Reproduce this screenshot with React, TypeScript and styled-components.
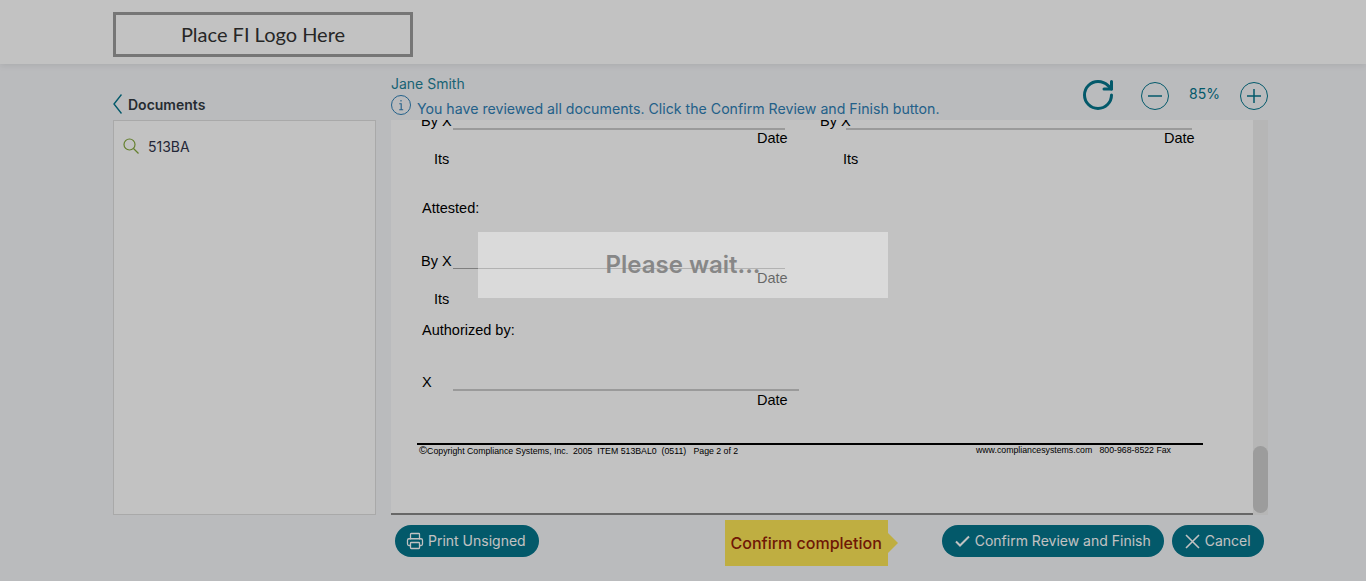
import { createGlobalStyle, styled } from "styled-components";
import { Printer, RotateCw } from "lucide-react";

const GlobalStyle = createGlobalStyle`
  html, body {
    margin: 0;
    padding: 0;
    height: 100%;
    overflow: hidden;
    background: #f5f6f9;
    font-family: Inter, "Liberation Sans", sans-serif;
  }
`;

const Page = styled.div`
  position: relative;
  width: 1366px;
  height: 581px;
  overflow: hidden;
  background: #f5f6f9;
`;

const Header = styled.header`
  height: 64px;
  box-sizing: border-box;
  padding: 12px 0 0 113px;
  background: #fff;
  box-shadow: 0 2px 6px rgba(0, 0, 0, 0.08);
`;

const LogoBox = styled.div`
  width: 300px;
  height: 45px;
  box-sizing: border-box;
  border: 3px solid #9c9c9c;
  padding-bottom: 2px;
  display: flex;
  align-items: center;
  justify-content: center;
  font-family: Lato, sans-serif;
  font-size: 20px;
  color: #333;
`;

const Main = styled.main`
  display: grid;
  grid-template-columns: 263px 877px;
  grid-template-rows: 56px 395px 66px;
  column-gap: 15px;
  padding-left: 113px;
`;

const SideTitle = styled.div`
  display: flex;
  align-items: flex-end;
  gap: 6px;
  padding-bottom: 6px;
  font-size: 14px;
  font-weight: 600;
  color: #333a42;
  line-height: 18px;
`;

const SideList = styled.div`
  box-sizing: border-box;
  border: 1px solid #dedede;
  background: #fff;
  padding: 15px 9px;
`;

const DocItem = styled.div`
  display: flex;
  align-items: center;
  gap: 9px;
  font-size: 14px;
  line-height: 21px;
  color: #30344a;
  svg {
    flex: none;
    margin-top: -1px;
  }
`;

const ViewerHead = styled.div`
  display: flex;
  justify-content: space-between;
  padding-top: 12px;
`;

const UserName = styled.div`
  font-size: 14px;
  line-height: 16px;
  color: #1f8299;
`;

const Notice = styled.div`
  display: flex;
  align-items: flex-start;
  gap: 6px;
  margin-top: 3px;
  font-size: 14.16px;
  line-height: 20px;
  color: #2f7fb5;
  svg {
    flex: none;
  }
  span {
    padding-top: 4px;
  }
`;

const Controls = styled.div`
  display: flex;
  align-items: flex-start;
  height: 40px;
  color: #04758c;
`;

const RefreshIcon = styled(RotateCw)`
  margin: 1px 25px 0 0;
`;

const RoundIcon = styled.svg`
  margin-top: 6px;
`;

const Zoom = styled.span`
  width: 71px;
  margin-top: 10px;
  text-align: center;
  font-size: 14px;
  line-height: 16px;
`;

const Viewer = styled.div`
  display: flex;
`;

const DocFrame = styled.div`
  width: 862px;
  height: 395px;
  box-sizing: border-box;
  border-bottom: 2px solid #888;
  background: #fff;
  overflow: hidden;
`;

const Track = styled.div`
  width: 15px;
  height: 395px;
  display: flex;
  align-items: flex-end;
  padding-bottom: 2px;
  box-sizing: border-box;
  background: #f0f0f0;
`;

const Thumb = styled.div`
  width: 15px;
  height: 67px;
  border-radius: 8px;
  background: #cdcdcd;
`;

const DocPage = styled.div`
  width: 786px;
  margin: -7px 0 0 26px;
  font-family: "Liberation Sans", Arial, sans-serif;
  font-size: 14.5px;
  line-height: 16px;
  color: #000;
`;

const SigColumns = styled.div`
  display: flex;
`;

const SigBlock = styled.div<{ $width: number; $top?: number }>`
  width: ${(p) => p.$width}px;
  margin-top: ${(p) => p.$top ?? 0}px;
`;

const SigRow = styled.div`
  display: flex;
  height: 16px;
`;

const SigLabel = styled.span<{ $width: number; $pad?: number }>`
  box-sizing: border-box;
  width: ${(p) => p.$width}px;
  padding-left: ${(p) => p.$pad ?? 4}px;
  white-space: nowrap;
`;

const SigRule = styled.span<{ $width: number; $thin?: boolean }>`
  width: ${(p) => p.$width}px;
  height: 15px;
  border-bottom: ${(p) => (p.$thin ? "1px solid #a8a8a8" : "2px solid #cbcbcb")};
`;

const DateLabel = styled.div<{ $left: number; $gap?: number }>`
  margin: ${(p) => p.$gap ?? 1}px 0 0 ${(p) => p.$left}px;
`;

const Its = styled.div<{ $left?: number }>`
  margin: 5px 0 0 ${(p) => p.$left ?? 17}px;
`;

const Caption = styled.div<{ $top: number }>`
  margin: ${(p) => p.$top}px 0 0 5px;
`;

const FooterRule = styled.div`
  margin-top: 35px;
  height: 2px;
  background: #000;
`;

const FooterText = styled.div`
  display: flex;
  justify-content: space-between;
  padding: 0 32px 0 2px;
  font-size: 8.75px;
  line-height: 11px;
  white-space: pre;
`;

const CopyMark = styled.span`
  font-size: 11px;
  line-height: 11px;
`;

const Actions = styled.div`
  display: flex;
  align-items: flex-start;
  width: 873px;
  padding: 5px 0 0 4px;
  box-sizing: border-box;
`;

const PillButton = styled.button<{ $ml?: number }>`
  height: 32px;
  margin-left: ${(p) => p.$ml ?? 0}px;
  margin-top: 5px;
  padding: 0 13px 2px;
  border: 0;
  border-radius: 16px;
  display: flex;
  align-items: center;
  gap: 5px;
  background: #04758c;
  color: #fff;
  font-family: Inter, "Liberation Sans", sans-serif;
  font-size: 14px;
  font-weight: 400;
  white-space: nowrap;
  svg {
    flex: none;
    margin-top: 2px;
  }
`;

const PrintIcon = styled(Printer)`
  margin: 2px -1px 0 -2px;
`;

const Hint = styled.div`
  position: relative;
  width: 163px;
  height: 46px;
  margin-left: 186px;
  display: flex;
  align-items: center;
  justify-content: center;
  background: #fbe556;
  color: #922207;
  font-size: 16px;
  font-weight: 500;
  white-space: nowrap;
  &::after {
    content: "";
    position: absolute;
    left: 100%;
    top: 13px;
    border-style: solid;
    border-width: 10px 0 10px 10px;
    border-color: transparent transparent transparent #fbe556;
  }
`;

const Dimmer = styled.div`
  position: absolute;
  inset: 0;
  padding-bottom: 51px;
  box-sizing: border-box;
  display: flex;
  align-items: center;
  justify-content: center;
  background: rgba(0, 0, 0, 0.24);
`;

const WaitBox = styled.div`
  width: 410px;
  height: 66px;
  padding-bottom: 2px;
  box-sizing: border-box;
  display: flex;
  align-items: center;
  justify-content: center;
  background: rgba(255, 255, 255, 0.4);
  color: #878787;
  font-size: 24px;
  font-weight: 600;
`;

export default function App() {
  return (
    <Page>
      <GlobalStyle />
      <Header>
        <LogoBox>Place FI Logo Here</LogoBox>
      </Header>
      <Main>
        <SideTitle>
          <svg width="9" height="20" viewBox="0 0 9 20" fill="none" stroke="#04758c" strokeWidth="1.4">
            <path d="M8.5 0.5 1 10l7.5 9.5" />
          </svg>
          Documents
        </SideTitle>
        <ViewerHead>
          <div>
            <UserName>Jane Smith</UserName>
            <Notice>
              <svg width="20" height="20" viewBox="0 0 20 20" fill="none" stroke="#2f7fb5">
                <circle cx="10" cy="10" r="9.5" />
                <path d="M10 5v1.5M8.3 8.8H10.2v6M8.2 14.8h4" strokeWidth="1.1" />
              </svg>
              <span>You have reviewed all documents. Click the Confirm Review and Finish button.</span>
            </Notice>
          </div>
          <Controls>
            <RefreshIcon size={36} strokeWidth={2} />
            <RoundIcon width="28" height="28" viewBox="0 0 28 28" fill="none" stroke="currentColor">
              <circle cx="14" cy="14" r="13.5" />
              <path d="M7 14h14" strokeWidth="1.5" />
            </RoundIcon>
            <Zoom>85%</Zoom>
            <RoundIcon width="28" height="28" viewBox="0 0 28 28" fill="none" stroke="currentColor">
              <circle cx="14" cy="14" r="13.5" />
              <path d="M7 14h14M14 7v14" strokeWidth="1.5" />
            </RoundIcon>
          </Controls>
        </ViewerHead>
        <SideList>
          <DocItem>
            <svg width="16" height="16" viewBox="0 0 16 16" fill="none" stroke="#84a83c" strokeWidth="1.2">
              <circle cx="6.5" cy="6.5" r="5.5" />
              <path d="M10.5 10.5 15.5 15.5" />
            </svg>
            513BA
          </DocItem>
        </SideList>
        <Viewer>
          <DocFrame>
            <DocPage>
              <SigColumns>
                <SigBlock $width={399}>
                  <SigRow>
                    <SigLabel $width={36}>By X</SigLabel>
                    <SigRule $width={332} />
                  </SigRow>
                  <DateLabel $left={340}>Date</DateLabel>
                  <Its>Its</Its>
                </SigBlock>
                <SigBlock $width={380}>
                  <SigRow>
                    <SigLabel $width={30}>By X</SigLabel>
                    <SigRule $width={346} />
                  </SigRow>
                  <DateLabel $left={348}>Date</DateLabel>
                  <Its $left={27}>Its</Its>
                </SigBlock>
              </SigColumns>
              <Caption $top={33}>Attested:</Caption>
              <SigBlock $width={399} $top={37}>
                <SigRow>
                  <SigLabel $width={36}>By X</SigLabel>
                  <SigRule $width={332} $thin />
                </SigRow>
                <DateLabel $left={340}>Date</DateLabel>
                <Its>Its</Its>
              </SigBlock>
              <Caption $top={15}>Authorized by:</Caption>
              <SigBlock $width={399} $top={36}>
                <SigRow>
                  <SigLabel $width={36} $pad={5}>X</SigLabel>
                  <SigRule $width={346} />
                </SigRow>
                <DateLabel $left={340} $gap={2}>Date</DateLabel>
              </SigBlock>
              <FooterRule />
              <FooterText>
                <span><CopyMark>©</CopyMark>Copyright Compliance Systems, Inc.  2005  ITEM 513BAL0  (0511)   Page 2 of 2</span>
                <span>www.compliancesystems.com   800-968-8522 Fax</span>
              </FooterText>
            </DocPage>
          </DocFrame>
          <Track>
            <Thumb />
          </Track>
        </Viewer>
        <div />
        <Actions>
          <PillButton>
            <PrintIcon size={18} strokeWidth={1.7} />
            Print Unsigned
          </PillButton>
          <Hint>Confirm completion</Hint>
          <PillButton $ml={54}>
            <svg width="15" height="12" viewBox="0 0 15 12" fill="none" stroke="currentColor" strokeWidth="2">
              <path d="M1 6.5 5 10.5 14 1.5" />
            </svg>
            Confirm Review and Finish
          </PillButton>
          <PillButton $ml={8}>
            <svg width="15" height="15" viewBox="0 0 15 15" fill="none" stroke="currentColor" strokeWidth="1.6">
              <path d="M1 1l13 13M14 1 1 14" />
            </svg>
            Cancel
          </PillButton>
        </Actions>
      </Main>
      <Dimmer>
        <WaitBox>Please wait...</WaitBox>
      </Dimmer>
    </Page>
  );
}
